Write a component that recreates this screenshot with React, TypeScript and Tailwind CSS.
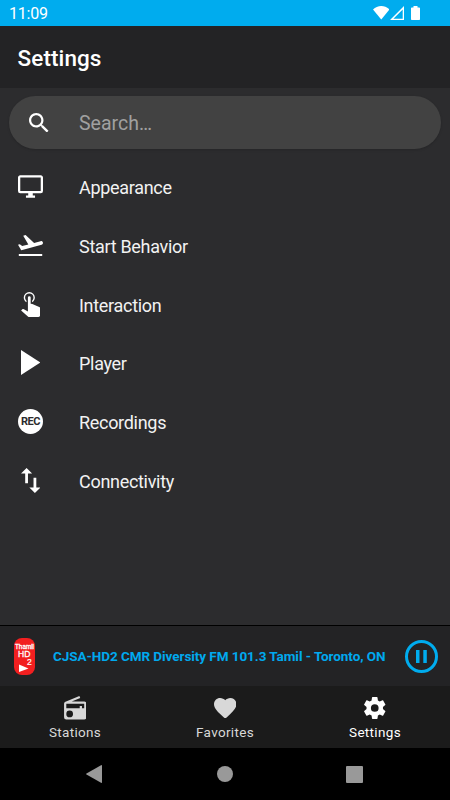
import { FC, ReactNode } from "react";

type glyphProps = {
  box: string;
  className: string;
  children: ReactNode;
};

const Glyph: FC<glyphProps> = ({ box, className, children }) => (
  <svg aria-hidden="true" viewBox={box} fill="currentColor" className={className}>
    {children}
  </svg>
);

const StatusBar = () => (
  <div className="h-[26px] shrink-0 bg-[#00acee] flex items-center justify-between pl-[9px] pr-[30px]">
    <span className="text-[16px] leading-none tracking-[-0.2px] mt-[2px]">11:09</span>
    <div className="flex items-center">
      <Glyph box="0 0 16 13" className="w-[16.5px] h-[13.5px]">
        <path d="M8 13 0 3.3C2.2 1.2 5 0 8 0s5.8 1.2 8 3.3z" />
      </Glyph>
      <Glyph box="0 0 14 14" className="w-[14px] h-[14px] ml-[1px]">
        <path d="M14 0v14H0zM12.7 3.4 3.4 12.7h9.3z" fillRule="evenodd" />
      </Glyph>
      <Glyph box="0 0 9 14" className="w-[9px] h-[14px] ml-[7px]">
        <path d="M2.5 0h4v1.4H8.2q.8 0 .8.8v11q0 .8-.8.8H.8q-.8 0-.8-.8v-11q0-.8.8-.8h1.7z" />
      </Glyph>
    </div>
  </div>
);

type item = {
  label: string;
  icon: ReactNode;
};

const items: item[] = [
  {
    label: "Appearance",
    icon: (
      <Glyph box="1 2 22 20" className="w-[25px] h-[23px]">
        <path d="M21,16H3V4H21M21,2H3C1.89,2 1,2.89 1,4V16A2,2 0 0,0 3,18H10V20H8V22H16V20H14V18H21A2,2 0 0,0 23,16V4C23,2.89 22.1,2 21,2Z" />
      </Glyph>
    ),
  },
  {
    label: "Start Behavior",
    icon: (
      <Glyph box="1.84 3.57 20.3 17.43" className="w-[25px] h-[21.5px]">
        <path d="M2.5,19H21.5V21H2.5V19M22.07,9.64C21.86,8.84 21.03,8.36 20.23,8.58L14.92,10L8,3.57L6.09,4.08L10.23,11.25L5.26,12.58L3.29,11.04L1.84,11.43L3.66,14.59L4.43,15.92L6.03,15.5L11.34,14.07L15.69,12.91L21,11.5C21.81,11.26 22.28,10.44 22.07,9.64Z" />
      </Glyph>
    ),
  },
  {
    label: "Interaction",
    icon: (
      <Glyph box="5.1 5 13.9 18" className="w-[19.5px] h-[25px]">
        <path d="M10,9A1,1 0 0,1 11,8A1,1 0 0,1 12,9V13.47L13.21,13.6L18.15,15.79C18.68,16.03 19,16.56 19,17.14V21.5C18.97,22.32 18.32,22.97 17.5,23H11C10.62,23 10.26,22.85 10,22.57L5.1,18.37L5.84,17.6C6.03,17.39 6.3,17.28 6.58,17.28H6.8L10,19V9M11,5A4,4 0 0,1 15,9C15,10.5 14.2,11.77 13,12.46V11.24C13.61,10.69 14,9.89 14,9A3,3 0 0,0 11,6A3,3 0 0,0 8,9C8,9.89 8.39,10.69 9,11.24V12.46C7.8,11.77 7,10.5 7,9A4,4 0 0,1 11,5Z" />
      </Glyph>
    ),
  },
  {
    label: "Player",
    icon: (
      <Glyph box="8 5.14 11 14" className="w-[19.5px] h-[25px]">
        <path d="M8,5.14V19.14L19,12.14L8,5.14Z" />
      </Glyph>
    ),
  },
  {
    label: "Recordings",
    icon: (
      <span className="w-[25px] h-[25px] rounded-full bg-white text-[#2c2c2e] flex items-center justify-center text-[11px] font-bold leading-none tracking-[-0.4px]">
        REC
      </span>
    ),
  },
  {
    label: "Connectivity",
    icon: (
      <Glyph box="5 3 14 18" className="w-[19.5px] h-[25px]">
        <path d="M9,3L5,7H8V14H10V7H13M16,17V10H14V17H11L15,21L19,17H16Z" />
      </Glyph>
    ),
  },
];

const SettingsRow: FC<item> = ({ label, icon }) => (
  <li className="h-[58.7px] flex items-center">
    <span className="w-[25px] ml-[18px] mr-9 flex justify-center -mt-px">{icon}</span>
    <span className="text-[18px] text-[#f2f2f2] leading-none tracking-[-0.3px] mt-[2px]">{label}</span>
  </li>
);

const NowPlaying = () => (
  <div className="h-[61px] shrink-0 border-t border-black bg-[#232325] flex items-center pl-[14px] pr-3">
    <svg viewBox="0 0 21 37" className="w-[21px] h-[37px] shrink-0 overflow-visible">
      <rect width="21" height="37" rx="8" fill="#f21f20" />
      <g fill="#fff" fontFamily="Liberation Sans">
        <text x="1" y="10.5" fontSize="6.5" stroke="#fff" strokeWidth="0.3" textLength="19" lengthAdjust="spacingAndGlyphs">
          Thamil
        </text>
        <text x="4" y="18.5" fontSize="8.5" stroke="#fff" strokeWidth="0.3">
          HD
        </text>
        <text x="13" y="27.3" fontSize="8.5" stroke="#fff" strokeWidth="0.2">
          2
        </text>
        <path d="M5 26.5v7.5l9.5-3.6z" />
      </g>
    </svg>
    <p className="flex-1 ml-[18px] mt-px text-[13.5px] font-bold text-[#00a9ee] whitespace-nowrap leading-none tracking-[-0.06px]">
      CJSA-HD2 CMR Diversity FM 101.3 Tamil - Toronto, ON
    </p>
    <svg viewBox="0 0 33 33" className="w-[33px] h-[33px] shrink-0 text-[#00acee]" fill="currentColor">
      <circle cx="16.5" cy="16.5" r="15" fill="none" stroke="currentColor" strokeWidth="3" />
      <path d="M11 10h3.5v13H11zM18.3 10h3.5v13h-3.5z" />
    </svg>
  </div>
);

const tabs: item[] = [
  {
    label: "Stations",
    icon: (
      <Glyph box="2 1 20 21" className="w-[22.5px] h-[23.5px]">
        <path d="M20,6A2,2 0 0,1 22,8V20A2,2 0 0,1 20,22H4A2,2 0 0,1 2,20V8C2,7.15 2.53,6.42 3.28,6.13L15.71,1L16.47,2.83L8.83,6H20M20,8H4V12H16V10H18V12H20V8M7,14A3,3 0 0,0 4,17A3,3 0 0,0 7,20A3,3 0 0,0 10,17A3,3 0 0,0 7,14Z" />
      </Glyph>
    ),
  },
  {
    label: "Favorites",
    icon: (
      <Glyph box="2 3 20 18.35" className="w-[22.5px] h-[20.7px]">
        <path d="M12,21.35L10.55,20.03C5.4,15.36 2,12.27 2,8.5C2,5.41 4.42,3 7.5,3C9.24,3 10.91,3.81 12,5.08C13.09,3.81 14.76,3 16.5,3C19.58,3 22,5.41 22,8.5C22,12.27 18.6,15.36 13.45,20.03L12,21.35Z" />
      </Glyph>
    ),
  },
  {
    label: "Settings",
    icon: (
      <Glyph box="2.25 2 19.5 20" className="w-[21.5px] h-[22px]">
        <path d="M12,15.5A3.5,3.5 0 0,1 8.5,12A3.5,3.5 0 0,1 12,8.5A3.5,3.5 0 0,1 15.5,12A3.5,3.5 0 0,1 12,15.5M19.43,12.97C19.47,12.65 19.5,12.33 19.5,12C19.5,11.67 19.47,11.34 19.43,11L21.54,9.37C21.73,9.22 21.78,8.95 21.66,8.73L19.66,5.27C19.54,5.05 19.27,4.96 19.05,5.05L16.56,6.05C16.04,5.66 15.5,5.32 14.87,5.07L14.5,2.42C14.46,2.18 14.25,2 14,2H10C9.75,2 9.54,2.18 9.5,2.42L9.13,5.07C8.5,5.32 7.96,5.66 7.44,6.05L4.95,5.05C4.73,4.96 4.46,5.05 4.34,5.27L2.34,8.73C2.21,8.95 2.27,9.22 2.46,9.37L4.57,11C4.53,11.34 4.5,11.67 4.5,12C4.5,12.33 4.53,12.65 4.57,12.97L2.46,14.63C2.27,14.78 2.21,15.05 2.34,15.27L4.34,18.73C4.46,18.95 4.73,19.03 4.95,18.95L7.44,17.94C7.96,18.34 8.5,18.68 9.13,18.93L9.5,21.58C9.54,21.82 9.75,22 10,22H14C14.25,22 14.46,21.82 14.5,21.58L14.87,18.93C15.5,18.67 16.04,18.34 16.56,17.94L19.05,18.95C19.27,19.03 19.54,18.95 19.66,18.73L21.66,15.27C21.78,15.05 21.73,14.78 21.54,14.63L19.43,12.97Z" />
      </Glyph>
    ),
  },
];

const TabBar: FC<{ active: string }> = ({ active }) => (
  <nav className="h-[62px] shrink-0 bg-[#1b1b1b] grid grid-cols-3">
    {tabs.map(({ label, icon }) => (
      <button
        key={label}
        className={
          "flex flex-col items-center pt-[10px] " +
          (label === active ? "text-white" : "text-[#d8d8d8]")
        }
      >
        <span className="h-6 flex items-center">{icon}</span>
        <span className="text-[13.5px] leading-none tracking-[0.33px] mt-[6px]">{label}</span>
      </button>
    ))}
  </nav>
);

const SystemBar = () => (
  <div className="h-[52px] shrink-0 bg-black text-[#999] flex items-center justify-between pl-[86px] pr-[87px]">
    <Glyph box="0 0 16 18" className="w-4 h-[18px]">
      <path d="M15 .2Q16-.3 16 .8v16.4q0 1.1-1 .6L.5 9.6Q-.3 9 .5 8.4z" />
    </Glyph>
    <span className="w-4 h-4 ml-px rounded-full bg-[#999]" />
    <span className="w-[17px] h-[17px] rounded-[1px] bg-[#999]" />
  </div>
);

const App = () => (
  <div className="w-[450px] h-[800px] overflow-hidden flex flex-col bg-[#2c2c2e] text-white font-[Roboto,sans-serif]">
    <StatusBar />
    <header className="h-[62px] shrink-0 bg-[#232325] flex items-center pl-[17.5px]">
      <h1 className="text-[22.5px] font-medium leading-none tracking-[0.1px] mt-[2px]">Settings</h1>
    </header>
    <main className="flex-1 min-h-0 pt-2">
      <div className="h-[53px] mx-[9px] rounded-full bg-[#424242] shadow-sm flex items-center pl-5">
        <Glyph box="3 3 17.49 17.49" className="w-[19.5px] h-[19.5px]">
          <path d="M15.5 14h-.79l-.28-.27C15.41 12.59 16 11.11 16 9.5 16 5.91 13.09 3 9.5 3S3 5.91 3 9.5 5.91 16 9.5 16c1.61 0 3.09-.59 4.23-1.57l.27.28v.79l5 4.99L20.49 19l-4.99-5zm-6 0C7.01 14 5 11.99 5 9.5S7.01 5 9.5 5 14 7.01 14 9.5 11.99 14 9.5 14z" />
        </Glyph>
        <span className="ml-[30.5px] text-[19.5px] leading-none text-[#a0a0a0] mt-[2px]">Search…</span>
      </div>
      <ul className="mt-[9px]">
        {items.map((entry) => (
          <SettingsRow key={entry.label} {...entry} />
        ))}
      </ul>
    </main>
    <NowPlaying />
    <TabBar active="Settings" />
    <SystemBar />
  </div>
);

export default App;
